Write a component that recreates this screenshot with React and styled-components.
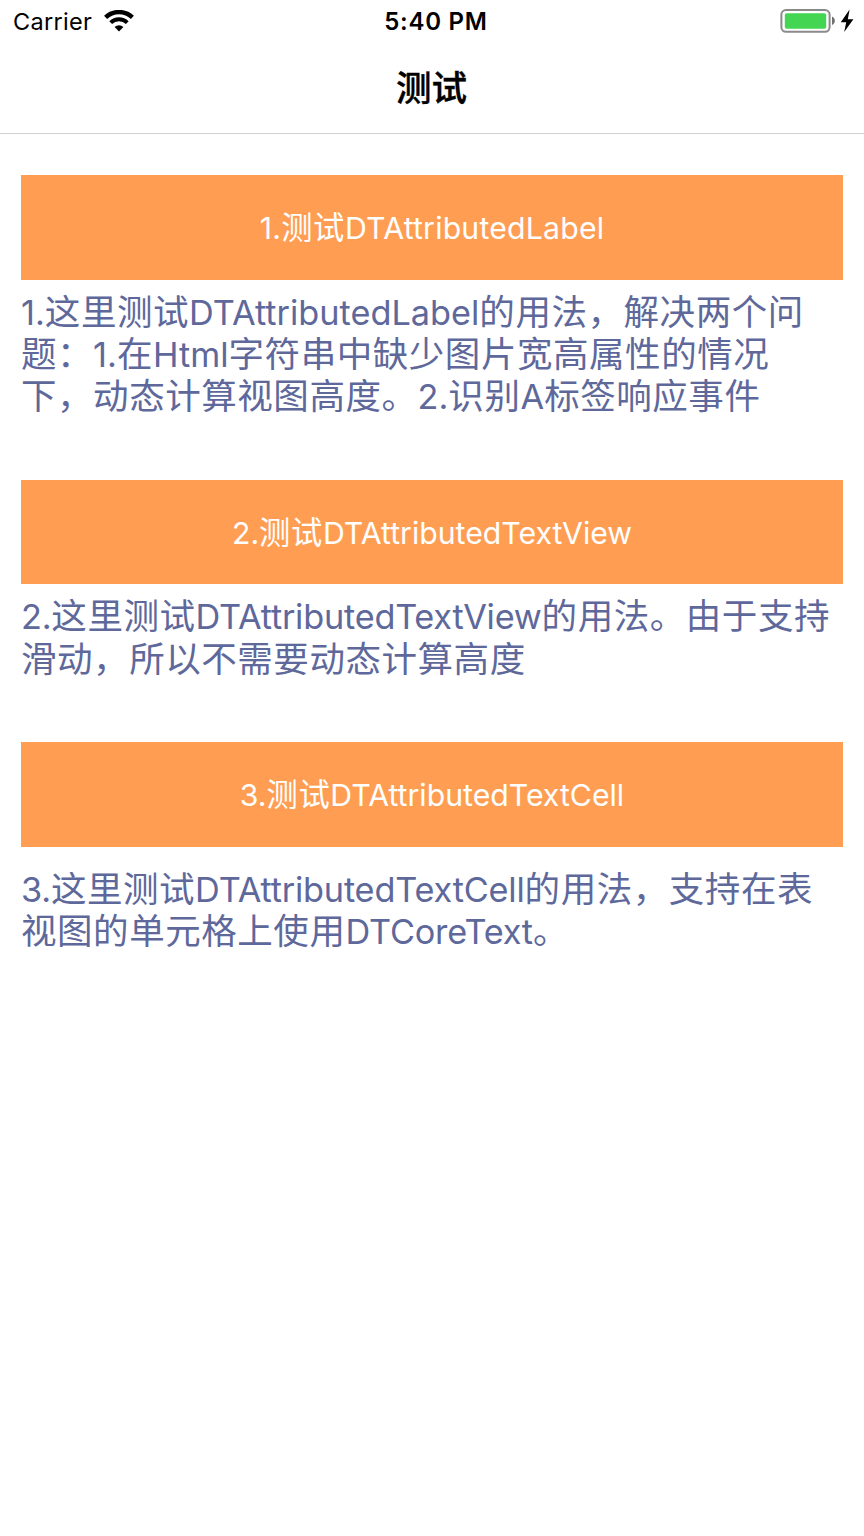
import React from "react";
import styled, { createGlobalStyle } from "styled-components";

const GlobalStyle = createGlobalStyle`
  * { box-sizing: border-box; }
  body {
    margin: 0;
    background: #fff;
    font-family: Inter, "Noto Sans CJK SC", sans-serif;
    font-kerning: normal;
  }
`;

const Screen = styled.div`
  width: 864px;
  height: 1536px;
  background: #fff;
  overflow: hidden;
`;

const Header = styled.header`
  height: 134px;
  border-bottom: 1px solid #d0d0d0;
`;

const StatusBar = styled.div`
  display: grid;
  grid-template-columns: 1fr auto 1fr;
  align-items: center;
  height: 42px;
  padding: 0 10px 0 13px;
  color: #000;
`;

const Carrier = styled.div`
  display: flex;
  align-items: center;
  gap: 12px;
  font-size: 23.5px;
  line-height: 42px;
  letter-spacing: 0.3px;

  svg {
    margin-bottom: 2px;
  }
`;

const Clock = styled.div`
  font-size: 24px;
  font-weight: 600;
  line-height: 42px;
  letter-spacing: 0.75px;
  padding: 1px 0 0 5px;
`;

const Power = styled.div`
  display: flex;
  justify-content: flex-end;
  align-items: center;
  padding-bottom: 2px;
`;

const Title = styled.h1`
  margin: 0;
  padding-right: 1px;
  text-align: center;
  font-size: 35.5px;
  line-height: 94px;
  font-weight: 500;
  -webkit-text-stroke: 0.4px #000;
  color: #000;
`;

const Content = styled.main`
  padding: 41.4px 21px 0;
`;

const Section = styled.section`
  height: ${(p) => p.$height}px;
`;

const Button = styled.button`
  display: block;
  width: 100%;
  height: 104.4px;
  padding: 1.6px 0 0;
  border: 0;
  background: #ff9e52;
  color: #fff;
  font-family: inherit;
  font-size: 31.3px;
  line-height: 102px;
  letter-spacing: 0.6px;
  text-align: center;
  white-space: nowrap;
`;

const Note = styled.p`
  margin: 0;
  padding-top: ${(p) => p.$offset}px;
  color: #5e689b;
  font-size: 35.5px;
  letter-spacing: 0.55px;
`;

const Line = styled.span`
  display: block;
  height: 42.3px;
  line-height: 42.3px;
  white-space: nowrap;
`;

const Latin = styled.span`
  font-size: 0.966em;
  letter-spacing: ${(p) => p.$tracking}px;
`;

function Mixed({ text, tracking }) {
  return text.split(/([\x20-\x7e]+)/).map((part, i) =>
    i % 2 ? <Latin key={i} $tracking={tracking}>{part}</Latin> : part
  );
}

function WifiIcon() {
  return (
    <svg width="30" height="22" viewBox="0 0 30 22" fill="none">
      <path d="M1.6 7.4a19.4 19.4 0 0 1 26.8 0" stroke="#000" strokeWidth="4.4" />
      <path d="M6.7 12.6a12 12 0 0 1 16.6 0" stroke="#000" strokeWidth="4" />
      <path d="M15 21.4 10.6 17a6.4 6.4 0 0 1 8.8 0z" fill="#000" />
    </svg>
  );
}

function BatteryIcon() {
  return (
    <svg width="74" height="26" viewBox="0 0 74 26" fill="none">
      <rect x="1.4" y="2" width="48.2" height="21.8" rx="4.6" stroke="#8a8a8a" strokeWidth="2" />
      <rect x="4.8" y="5.2" width="41.4" height="15.6" rx="2" fill="#44d553" />
      <path d="M52 8.6c3.8 1.4 3.8 7 0 8.4z" fill="#707070" />
      <path d="M69.6 1.6 60.8 14.2h5.4l-2 9.8 9.2-12.8h-5.6z" fill="#000" />
    </svg>
  );
}

const sections = [
  {
    title: "1.测试DTAttributedLabel",
    titleTracking: 0.2,
    height: 304.7,
    offset: 12,
    tracking: 0,
    lines: [
      "1.这里测试DTAttributedLabel的用法，解决两个问",
      "题：1.在Html字符串中缺少图片宽高属性的情况",
      "下，动态计算视图高度。2.识别A标签响应事件",
    ],
  },
  {
    title: "2.测试DTAttributedTextView",
    titleTracking: 0,
    height: 262.3,
    offset: 12,
    tracking: -0.23,
    lines: [
      "2.这里测试DTAttributedTextView的用法。由于支持",
      "滑动，所以不需要动态计算高度",
    ],
  },
  {
    title: "3.测试DTAttributedTextCell",
    titleTracking: 0,
    height: 262,
    offset: 22.4,
    tracking: -0.19,
    lines: [
      "3.这里测试DTAttributedTextCell的用法，支持在表",
      "视图的单元格上使用DTCoreText。",
    ],
  },
];

export default function App() {
  return (
    <Screen>
      <GlobalStyle />
      <Header>
        <StatusBar>
          <Carrier>
            Carrier
            <WifiIcon />
          </Carrier>
          <Clock>5:40 PM</Clock>
          <Power>
            <BatteryIcon />
          </Power>
        </StatusBar>
        <Title>测试</Title>
      </Header>
      <Content>
        {sections.map((s) => (
          <Section key={s.title} $height={s.height}>
            <Button type="button">
              <Mixed text={s.title} tracking={s.titleTracking} />
            </Button>
            <Note $offset={s.offset}>
              {s.lines.map((line) => (
                <Line key={line}>
                  <Mixed text={line} tracking={s.tracking} />
                </Line>
              ))}
            </Note>
          </Section>
        ))}
      </Content>
    </Screen>
  );
}
